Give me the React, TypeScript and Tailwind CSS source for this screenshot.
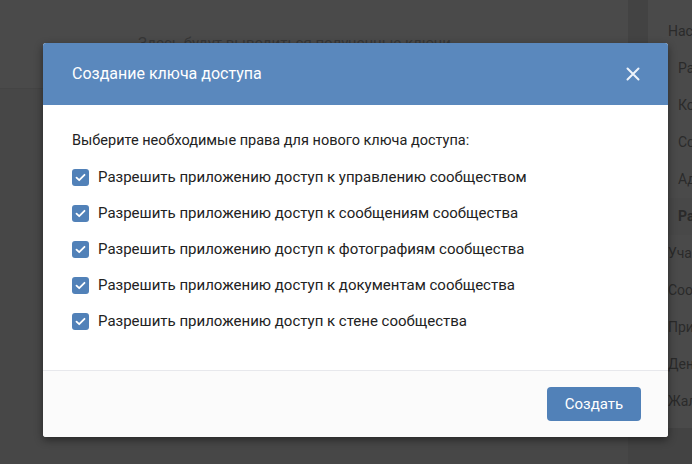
import React from "react";

const permissions = [
  "Разрешить приложению доступ к управлению сообществом",
  "Разрешить приложению доступ к сообщениям сообщества",
  "Разрешить приложению доступ к фотографиям сообщества",
  "Разрешить приложению доступ к документам сообщества",
  "Разрешить приложению доступ к стене сообщества",
];

const sideItems = [
  { label: "Настройки", sub: false, active: false },
  { label: "Разделы", sub: true, active: false },
  { label: "Комментарии", sub: true, active: false },
  { label: "Ссылки", sub: true, active: false },
  { label: "Адрес", sub: true, active: false },
  { label: "Работа с API", sub: true, active: true },
  { label: "Участники", sub: false, active: false },
  { label: "Сообщения", sub: false, active: false },
  { label: "Приложения", sub: false, active: false },
  { label: "Денежные переводы", sub: false, active: false },
  { label: "Жалобы", sub: false, active: false },
];

const Check = () => (
  <span className="flex h-[17px] w-[17px] shrink-0 items-center justify-center rounded-[3px] bg-[#5181b8]">
    <svg width="11" height="9" viewBox="0 0 11 9" fill="none">
      <path d="M1.5 4.6 4.2 7.2 9.5 1.8" stroke="white" strokeWidth="1.8" strokeLinecap="round" strokeLinejoin="round" />
    </svg>
  </span>
);

const App: React.FC = () => {
  return (
    <div className="relative h-[464px] w-[692px] overflow-hidden bg-[#434343] font-['Roboto',sans-serif]">
      {/* Dimmed page underneath */}
      <div className="flex h-full gap-[20px]">
        <div className="flex w-[628px] shrink-0 flex-col">
          <div className="flex h-[89px] items-start border-b border-[#444] bg-[#4a4a4a] pl-[138px] pt-[32px] text-[15px] text-[#363636]">
            Здесь будут выводиться полученные ключи
          </div>
          <div className="flex-1 bg-[#474747]" />
        </div>
        <div className="flex h-[428px] flex-1 flex-col bg-[#4a4a4a] pt-[13px] text-[14px] text-[#2a2a2a]">
          {sideItems.map((it) => (
            <div
              key={it.label}
              className={`flex h-[37px] items-center whitespace-nowrap ${it.sub ? "pl-[30px]" : "pl-[20px]"} ${
                it.active ? "bg-[#484848] font-bold" : ""
              }`}
            >
              {it.label}
            </div>
          ))}
        </div>
      </div>

      {/* Modal */}
      <div className="absolute left-[43px] top-[43px] w-[625px] overflow-hidden rounded-[3px] bg-white shadow-[0_3px_8px_rgba(0,0,0,0.45)]">
        <div className="flex h-[62px] items-center justify-between bg-[#5a88bd] pl-[29px] pr-[28px]">
          <span className="text-[16px] text-white">Создание ключа доступа</span>
          <svg width="14" height="14" viewBox="0 0 14 14">
            <path d="M1.5 1.5 12.5 12.5M12.5 1.5 1.5 12.5" stroke="#eef3fa" strokeWidth="2" strokeLinecap="round" />
          </svg>
        </div>
        <div className="flex h-[265px] flex-col px-[29px] pt-[25px] text-[#222]">
          <div className="mb-[16px] text-[14.5px]">Выберите необходимые права для нового ключа доступа:</div>
          <div className="flex flex-col gap-[17px] text-[15px]">
            {permissions.map((p) => (
              <label key={p} className="flex items-center gap-[9px] leading-[19px]">
                <Check />
                <span>{p}</span>
              </label>
            ))}
          </div>
        </div>
        <div className="flex h-[67px] items-center justify-end border-t border-[#e7e8ec] bg-[#fbfbfb] pr-[27px]">
          <button className="h-[34px] w-[94px] rounded-[4px] bg-[#5181b8] text-[15px] text-white">Создать</button>
        </div>
      </div>
    </div>
  );
};

export default App;
